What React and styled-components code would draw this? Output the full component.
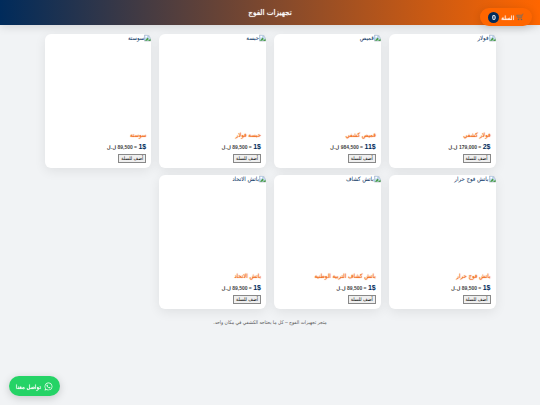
import React, { useState } from 'react';
import styled, { createGlobalStyle } from 'styled-components';
import { FaWhatsapp } from 'react-icons/fa';

const products = [
  { id: 1, title: 'فولار كشفي', alt: 'فولار', usd: 2, lbp: '179,000' },
  { id: 2, title: 'قميص كشفي', alt: 'قميص', usd: 11, lbp: '984,500' },
  { id: 3, title: 'حبسة فولار', alt: 'حبسة', usd: 1, lbp: '89,500' },
  { id: 4, title: 'سوستة', alt: 'سوستة', usd: 1, lbp: '89,500' },
  { id: 5, title: 'باتش فوج حرار', alt: 'باتش فوج حرار', usd: 1, lbp: '89,500' },
  { id: 6, title: 'باتش كشاف التربية الوطنية', alt: 'باتش كشاف', usd: 1, lbp: '89,500' },
  { id: 7, title: 'باتش الاتحاد', alt: 'باتش الاتحاد', usd: 1, lbp: '89,500' },
];

const BrokenImage = () => (
  <BrokenIcon viewBox="0 0 16 16" aria-hidden="true">
    <path d="M1 1h10l4 4v10H1z" fill="#c5d8f2" stroke="#8c9bab" />
    <path d="M11 1v4h4z" fill="#fff" stroke="#8c9bab" />
    <circle cx="5" cy="5" r="2" fill="#fff" />
    <path d="M2 14l6-7 3 3-4 4z" fill="#4ba046" />
    <path d="M9 15l6-6v6z" fill="#4ba046" />
  </BrokenIcon>
);

const CartIcon = () => (
  <CartSvg viewBox="0 0 16 16" aria-hidden="true">
    <path d="M15 2h-2l-2 8H4" fill="none" stroke="#8b6a55" strokeWidth="1.4" />
    <path d="M1 4h11l-1.500 5H3z" fill="#a0724f" stroke="#8b6a55" />
    <path d="M4 4v5M7 4v5M10 4v5M2 6.500h9" stroke="#c96b26" strokeWidth=".7" />
    <circle cx="5" cy="13" r="1.500" fill="#6f6259" />
    <circle cx="11" cy="13" r="1.500" fill="#6f6259" />
  </CartSvg>
);

const Product = ({ item, onAdd }) => {
  return (
    <Card>
      <Picture>
        <BrokenImage />
        <span>{item.alt}</span>
      </Picture>
      <Info>
        <Title>{item.title}</Title>
        <Price>
          <Usd>{item.usd}$</Usd> = {item.lbp} ل.ل
        </Price>
        <AddButton onClick={onAdd}>أضف للسلة</AddButton>
      </Info>
    </Card>
  );
};

const App = () => {
  const [count, setCount] = useState(0);

  return (
    <Page dir="rtl" lang="ar">
      <GlobalStyle />
      <Header>
        <h1>تجهيزات الفوج</h1>
      </Header>
      <CartButton>
        <CartIcon />
        <span>السلة</span>
        <Count>{count}</Count>
      </CartButton>
      <Grid>
        {products.map((item) => (
          <Product key={item.id} item={item} onAdd={() => setCount(count + 1)} />
        ))}
      </Grid>
      <Footer>متجر تجهيزات الفوج – كل ما يحتاجه الكشفي في مكان واحد.</Footer>
      <Whatsapp href="#contact">
        <FaWhatsapp size={9} />
        <span>تواصل معنا</span>
      </Whatsapp>
    </Page>
  );
};

const GlobalStyle = createGlobalStyle`
  * {
    box-sizing: border-box;
  }
  body {
    margin: 0;
    background: #f1f3f5;
    color: #002b5b;
    font-family: "Liberation Sans", "DejaVu Sans Condensed", sans-serif;
  }
`;
const Page = styled.div`
  min-height: 100vh;
`;
const Header = styled.header`
  display: flex;
  align-items: center;
  justify-content: center;
  height: 25px;
  background: linear-gradient(90deg, #002b5b, #ff6600);
  box-shadow: 0 2px 10px rgba(0, 0, 0, 0.12);
  color: white;

  h1 {
    margin: 0;
    font-size: 8px;
    font-weight: normal;
    line-height: 9px;
    text-shadow: 0 0 1px currentColor;
  }
`;
const CartButton = styled.button`
  position: fixed;
  top: 8px;
  right: 8px;
  display: flex;
  align-items: center;
  gap: 2px;
  height: 18px;
  padding: 0 8px;
  border: none;
  border-radius: 20px;
  background: #ff6600;
  box-shadow: 0 2px 8px rgba(0, 0, 0, 0.15);
  color: white;
  font-family: inherit;
  font-size: 6px;
  text-shadow: 0 0 1px currentColor;
  cursor: pointer;
`;
const CartSvg = styled.svg`
  width: 8px;
  height: 8px;
`;
const Count = styled.span`
  width: 11px;
  border-radius: 50%;
  background: #002b5b;
  font-size: 7px;
  font-weight: bold;
  line-height: 11px;
  text-align: center;
  text-shadow: none;
`;
const Grid = styled.main`
  display: grid;
  grid-template-columns: repeat(4, 1fr);
  gap: 7px 8px;
  max-width: 451px;
  margin: 9px auto 0;
`;
const Card = styled.article`
  overflow: hidden;
  border-radius: 6px;
  background: white;
  box-shadow: 0 3px 12px rgba(0, 0, 0, 0.08);
`;
const Picture = styled.div`
  display: flex;
  align-items: flex-start;
  height: 94px;
  font-size: 6px;
  line-height: 8px;
`;
const BrokenIcon = styled.svg`
  flex: none;
  width: 7px;
  height: 8px;
`;
const Info = styled.div`
  padding: 3px 5px 5px;
`;
const Title = styled.h3`
  margin: 0 0 2px;
  color: #f37021;
  font-size: 6px;
  font-weight: normal;
  line-height: 9px;
  text-shadow: 0 0 1px currentColor;
`;
const Price = styled.p`
  margin: 0 0 2px;
  color: #444;
  font-size: 5px;
  font-weight: bold;
  line-height: 9px;
`;
const Usd = styled.span`
  color: #002b5b;
  font-size: 7px;
`;
const AddButton = styled.button`
  display: block;
  height: 9px;
  padding: 0 2px;
  border: 1px solid #888;
  background: #efefef;
  color: black;
  font-family: inherit;
  font-size: 5px;
  line-height: 7px;
  cursor: pointer;
`;
const Footer = styled.footer`
  padding: 9px;
  color: #555;
  font-size: 5px;
  line-height: 8px;
  text-align: center;
`;
const Whatsapp = styled.a`
  position: fixed;
  bottom: 9px;
  left: 9px;
  display: flex;
  align-items: center;
  gap: 3px;
  height: 20px;
  padding: 0 7px;
  border-radius: 20px;
  background: #25d366;
  box-shadow: 0 2px 9px rgba(0, 0, 0, 0.18);
  color: white;
  font-size: 6px;
  text-decoration: none;
  text-shadow: 0 0 1px currentColor;
`;

export default App;
